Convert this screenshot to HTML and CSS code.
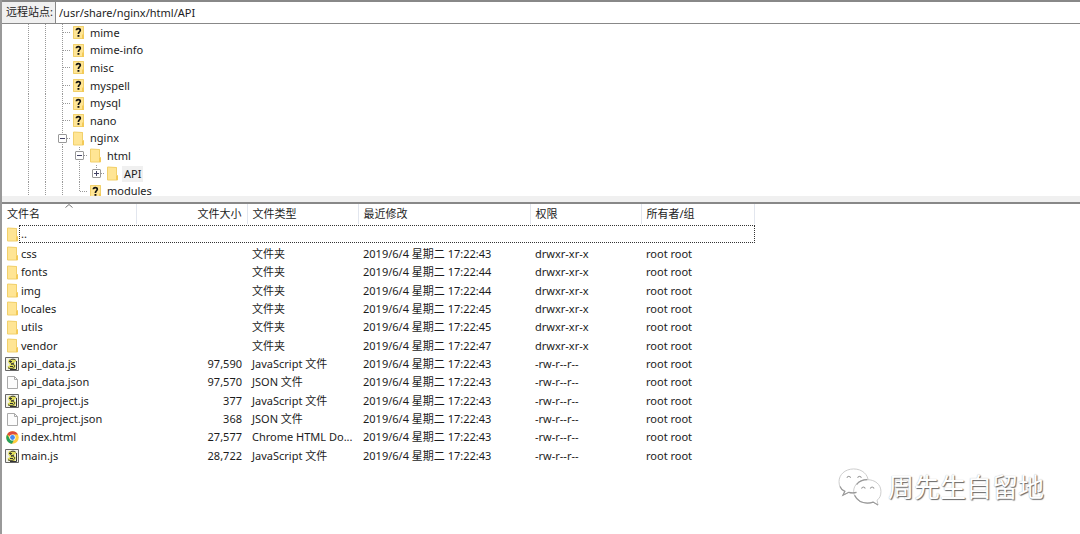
FILE: index.html
```html
<!DOCTYPE html>
<html lang="zh-CN">
<head>
<meta charset="utf-8">
<title>远程站点</title>
<link rel="stylesheet" href="styles.css">
</head>
<body>
<svg class="defs" aria-hidden="true">
  <symbol id="folder" viewBox="0 0 12 15">
    <path d="M0 1h10v8l1 1v4H0z" fill="#ffe594"/>
    <path d="M.5 1v13h10V10l-1-1V1.500z" fill="none" stroke="#f1d06c"/>
    <path d="M9 9.500h2V14H9z" fill="#f3ca58"/>
  </symbol>
  <symbol id="unknown" viewBox="0 0 12 15">
    <path d="M0 1h11v13H0z" fill="#ffe594"/>
    <path d="M.5 1.500h10v12H.5z" fill="none" stroke="#f1d06c"/>
    <path d="M9 9.500h2V14H9z" fill="#f3ca58"/>
    <path d="M3.400 5.200C3.400 3 7.300 3 7.300 5.200 7.300 6.800 5.400 6.800 5.400 9" fill="none" stroke="#111" stroke-width="1.700"/>
    <path d="M4.500 10h1.900v1.800H4.500z" fill="#111"/>
  </symbol>
  <symbol id="script" viewBox="0 0 14 14">
    <path d="M.5.5h13v13H.5z" fill="#f1f1e8" stroke="#666"/>
    <path d="M4 2h6l1.500 2-2.500 2 2 2.500-1 3.500H3.500L2.500 9.500 5 8 3 5z" fill="#e0de5c"/>
    <path d="M10.500 3C9 1.500 4.500 2 5 4.500S10 7 9.500 9.500 4 12 3 10.500M4 4.500h3M6 7.500l3-1.500M5 9.500h3M11.500 4v8.500H5" fill="none" stroke="#333" stroke-width="1"/>
  </symbol>
  <symbol id="page" viewBox="0 0 12 15">
    <path d="M.5 1.500h7l3 3v9H.5z" fill="#fcfcfc" stroke="#aaa"/>
    <path d="M7.500 1.500v3h3" fill="none" stroke="#aaa"/>
  </symbol>
  <symbol id="chrome" viewBox="0 0 24 24">
    <circle cx="12" cy="12" r="11.500" fill="#ffcd40"/>
    <path d="M12 12 2 6.300A11.500 11.500 0 0 1 22 6.300H12z" fill="#df4a3c"/>
    <path d="M2 6.300A11.500 11.500 0 0 0 11 23.500L16 14.500 12 12 7 14.500z" fill="#26a05b"/>
    <circle cx="12" cy="12" r="5.700" fill="#fff"/>
    <circle cx="12" cy="12" r="4.400" fill="#4688ef"/>
  </symbol>
</svg>

<main class="site">
  <form class="address">
    <label class="address-label" for="path">远程站点:</label>
    <input class="address-input" id="path" type="text" value="/usr/share/nginx/html/API">
  </form>

  <section class="tree-pane" aria-label="目录">
    <ul class="tree">
      <li class="node"><i class="guide line"></i><i class="guide line"></i><i class="guide line tee"></i><svg class="icon"><use href="#unknown"/></svg><span class="name">mime</span></li>
      <li class="node"><i class="guide line"></i><i class="guide line"></i><i class="guide line tee"></i><svg class="icon"><use href="#unknown"/></svg><span class="name">mime-info</span></li>
      <li class="node"><i class="guide line"></i><i class="guide line"></i><i class="guide line tee"></i><svg class="icon"><use href="#unknown"/></svg><span class="name">misc</span></li>
      <li class="node"><i class="guide line"></i><i class="guide line"></i><i class="guide line tee"></i><svg class="icon"><use href="#unknown"/></svg><span class="name">myspell</span></li>
      <li class="node"><i class="guide line"></i><i class="guide line"></i><i class="guide line tee"></i><svg class="icon"><use href="#unknown"/></svg><span class="name">mysql</span></li>
      <li class="node"><i class="guide line"></i><i class="guide line"></i><i class="guide line tee"></i><svg class="icon"><use href="#unknown"/></svg><span class="name">nano</span></li>
      <li class="node"><i class="guide line"></i><i class="guide line"></i><i class="guide line tee"><button class="toggle" type="button" aria-label="折叠 nginx"></button></i><svg class="icon"><use href="#folder"/></svg><span class="name">nginx</span></li>
      <li class="node"><i class="guide line"></i><i class="guide line"></i><i class="guide line"></i><i class="guide line tee"><button class="toggle" type="button" aria-label="折叠 html"></button></i><svg class="icon"><use href="#folder"/></svg><span class="name">html</span></li>
      <li class="node"><i class="guide line"></i><i class="guide line"></i><i class="guide line"></i><i class="guide line"></i><i class="guide end tee"><button class="toggle closed" type="button" aria-label="展开 API"></button></i><svg class="icon"><use href="#folder"/></svg><span class="name selected">API</span></li>
      <li class="node"><i class="guide line"></i><i class="guide line"></i><i class="guide line"></i><i class="guide end tee"></i><svg class="icon"><use href="#unknown"/></svg><span class="name">modules</span></li>
    </ul>
  </section>

  <section class="list-pane" aria-label="文件">
    <table class="files">
      <colgroup><col class="c-name"><col class="c-size"><col class="c-type"><col class="c-date"><col class="c-perm"><col class="c-owner"></colgroup>
      <thead>
        <tr><th class="sorted">文件名<svg class="sort" viewBox="0 0 8 4"><path d="M.5 3.500 4 .5l3.500 3" fill="none" stroke="#777"/></svg></th><th class="num">文件大小</th><th>文件类型</th><th>最近修改</th><th>权限</th><th>所有者/组</th></tr>
      </thead>
      <tbody>
        <tr><td colspan="6" class="parent"><div class="file"><svg class="icon"><use href="#folder"/></svg><span class="focus">..</span></div></td></tr>
        <tr><td><div class="file"><svg class="icon"><use href="#folder"/></svg>css</div></td><td></td><td>文件夹</td><td>2019/6/4 星期二 17:22:43</td><td>drwxr-xr-x</td><td>root root</td></tr>
        <tr><td><div class="file"><svg class="icon"><use href="#folder"/></svg>fonts</div></td><td></td><td>文件夹</td><td>2019/6/4 星期二 17:22:44</td><td>drwxr-xr-x</td><td>root root</td></tr>
        <tr><td><div class="file"><svg class="icon"><use href="#folder"/></svg>img</div></td><td></td><td>文件夹</td><td>2019/6/4 星期二 17:22:44</td><td>drwxr-xr-x</td><td>root root</td></tr>
        <tr><td><div class="file"><svg class="icon"><use href="#folder"/></svg>locales</div></td><td></td><td>文件夹</td><td>2019/6/4 星期二 17:22:45</td><td>drwxr-xr-x</td><td>root root</td></tr>
        <tr><td><div class="file"><svg class="icon"><use href="#folder"/></svg>utils</div></td><td></td><td>文件夹</td><td>2019/6/4 星期二 17:22:45</td><td>drwxr-xr-x</td><td>root root</td></tr>
        <tr><td><div class="file"><svg class="icon"><use href="#folder"/></svg>vendor</div></td><td></td><td>文件夹</td><td>2019/6/4 星期二 17:22:47</td><td>drwxr-xr-x</td><td>root root</td></tr>
        <tr><td><div class="file"><svg class="icon wide"><use href="#script"/></svg>api_data.js</div></td><td class="num">97,590</td><td>JavaScript 文件</td><td>2019/6/4 星期二 17:22:43</td><td>-rw-r--r--</td><td>root root</td></tr>
        <tr><td><div class="file"><svg class="icon"><use href="#page"/></svg>api_data.json</div></td><td class="num">97,570</td><td>JSON 文件</td><td>2019/6/4 星期二 17:22:43</td><td>-rw-r--r--</td><td>root root</td></tr>
        <tr><td><div class="file"><svg class="icon wide"><use href="#script"/></svg>api_project.js</div></td><td class="num">377</td><td>JavaScript 文件</td><td>2019/6/4 星期二 17:22:43</td><td>-rw-r--r--</td><td>root root</td></tr>
        <tr><td><div class="file"><svg class="icon"><use href="#page"/></svg>api_project.json</div></td><td class="num">368</td><td>JSON 文件</td><td>2019/6/4 星期二 17:22:43</td><td>-rw-r--r--</td><td>root root</td></tr>
        <tr><td><div class="file"><svg class="icon round"><use href="#chrome"/></svg>index.html</div></td><td class="num">27,577</td><td>Chrome HTML Do...</td><td>2019/6/4 星期二 17:22:43</td><td>-rw-r--r--</td><td>root root</td></tr>
        <tr><td><div class="file"><svg class="icon wide"><use href="#script"/></svg>main.js</div></td><td class="num">28,722</td><td>JavaScript 文件</td><td>2019/6/4 星期二 17:22:43</td><td>-rw-r--r--</td><td>root root</td></tr>
      </tbody>
    </table>
  </section>
</main>

<div class="watermark">
  <svg class="bubbles" viewBox="0 0 46 40" aria-hidden="true">
    <g fill="#fff" stroke="#ccc" stroke-width="1">
      <path d="M17 2C8 2 2 8 2 15c0 5 2 8 6 10l-2 4 6-3c3 1 6 1 9 0C31 25 32 19 32 15 32 8 26 2 17 2z"/>
      <path d="M31 13c-8 0-14 5-14 12s6 12 14 12c2 0 4 0 6-1l5 3-1-5c3-2 4-5 4-9 0-7-6-12-14-12z"/>
    </g>
    <path d="M10 11q2-3 4 0M21 11q2-3 4 0M25 22q2-3 4 0M34 22q2-3 4 0M3 20q1 3 5 5l-2 4 6-3q4 1 8 0M18 29q4 8 13 8 3 0 6-1l5 3M20 18q4-5 11-5" fill="none" stroke="#999" stroke-width="1.200"/>
  </svg>
  <span>周先生自留地</span>
</div>
</body>
</html>
```

FILE: styles.css
```css
* { box-sizing: border-box; }

body {
  margin: 0;
  min-height: 100vh;
  position: relative;
  background: #fff;
  color: #1c1c1c;
  font: 11px/16px "Noto Sans", "Noto Sans CJK SC", sans-serif;
}

.defs { position: absolute; width: 0; height: 0; }

.site {
  display: flex;
  flex-direction: column;
  min-height: 100vh;
  border-left: 2px solid #999;
}

.address {
  display: flex;
  border-top: 2px solid #888;
  border-bottom: 1px solid #888;
}

.address-label {
  width: 53px;
  padding: 2px 0 3px 4px;
  background: #f0f0f0;
  white-space: nowrap;
}

.address-input {
  flex: 1;
  min-width: 0;
  padding: 0 3px;
  border: 0;
  border-left: 1px solid #888;
  background: #fff;
  color: inherit;
  font: inherit;
  outline: 0;
}

.tree-pane {
  height: 172px;
  overflow: hidden;
}

.tree {
  display: grid;
  grid-template-rows: repeat(10, 1fr);
  height: 176px;
  margin: 0;
  padding: 0 0 0 18px;
  list-style: none;
}

.node { display: flex; align-items: center; }

.guide {
  --v: repeating-linear-gradient(to bottom, #999 0 1px, transparent 1px 2px);
  --h: repeating-linear-gradient(to right, #999 0 1px, transparent 1px 2px);
  align-self: stretch;
  display: flex;
  align-items: center;
  width: 17px;
  padding-left: 4px;
}

.line { background: var(--v) 8px 0 / 1px 100% no-repeat; }
.line.tee { background: var(--v) 8px 0 / 1px 100% no-repeat, var(--h) 9px 50% / 8px 1px no-repeat; }
.end.tee { background: var(--v) 8px 0 / 1px 50% no-repeat, var(--h) 9px 50% / 8px 1px no-repeat; }

.toggle {
  width: 9px;
  height: 9px;
  padding: 0;
  border: 1px solid #999;
  border-radius: 1px;
  background: linear-gradient(#446, #446) center / 5px 1px no-repeat, #fff;
}

.toggle.closed {
  background: linear-gradient(#446, #446) center / 5px 1px no-repeat,
    linear-gradient(#446, #446) center / 1px 5px no-repeat, #fff;
}

.icon { flex: none; width: 12px; height: 15px; }
.icon.wide { width: 14px; height: 14px; margin: 0 0 0 -2px; }
.icon.round { width: 13px; height: 13px; margin: 0 0 0 -1px; }

.node .icon { margin-left: 2px; }
.name { margin-left: 3px; padding: 0 2px; }
.selected { background: #f0f0f0; }

.list-pane {
  flex: 1;
  border-top: 6px solid #f0f0f0;
  box-shadow: inset 0 2px #888;
  padding-top: 2px;
}

.files {
  width: 753px;
  height: 261px;
  table-layout: fixed;
  border-collapse: collapse;
}

.c-name { width: 134px; }
.c-size, .c-type, .c-perm { width: 111px; }
.c-date { width: 172px; }

.files th, .files td {
  padding: 0 5px;
  text-align: left;
  font-weight: 400;
  white-space: nowrap;
}

.files th {
  height: 20px;
  border-right: 1px solid #e2e6ee;
}

.files .num { text-align: right; }
.files .parent { padding-right: 0; }

.sorted { position: relative; }
.sort { position: absolute; top: 0; left: 63px; width: 8px; height: 4px; }

.file { display: flex; align-items: center; gap: 2px; }

.focus {
  flex: 1;
  height: 18px;
  margin-left: -2px;
  padding-left: 1px;
  border: 1px dotted #333;
}

.watermark {
  position: absolute;
  right: 36px;
  bottom: 28px;
  display: flex;
  align-items: center;
  gap: 6px;
  color: #fff;
  font: 26px/40px "Noto Sans CJK SC", sans-serif;
  text-shadow: 1px 1px 1px #666, 0 0 1px #aaa;
}

.bubbles { width: 45px; height: 39px; }
```
